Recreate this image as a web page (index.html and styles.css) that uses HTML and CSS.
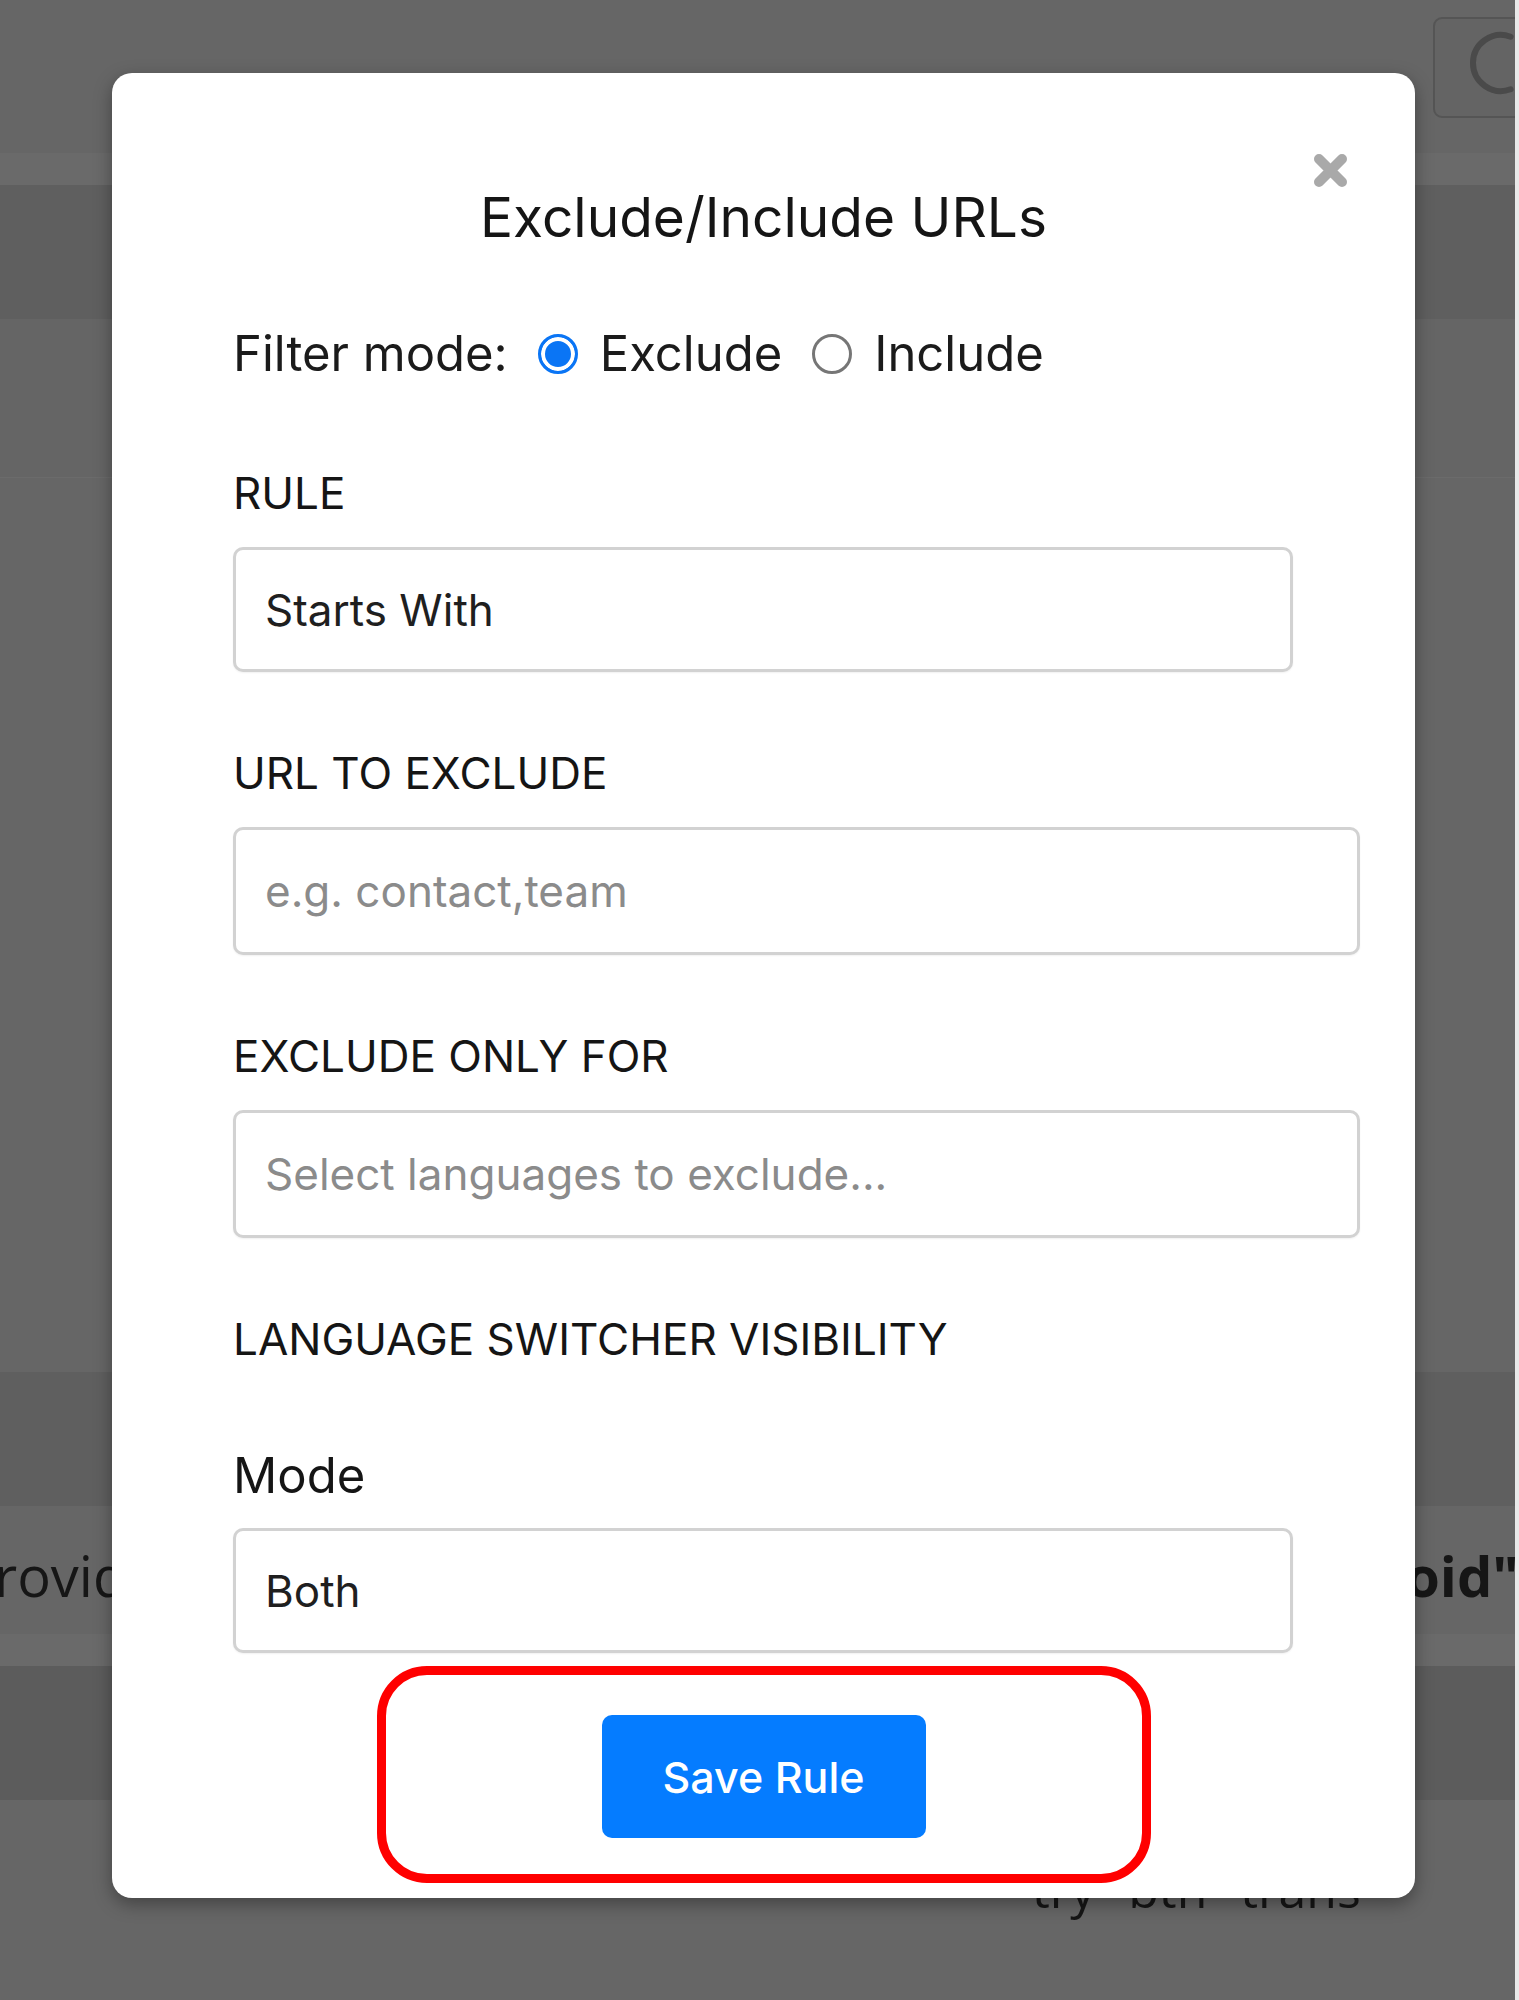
FILE: index.html
```html
<!DOCTYPE html>
<html lang="en">
<head>
<meta charset="utf-8">
<title>Exclude/Include URLs</title>
<link rel="stylesheet" href="styles.css">
</head>
<body>
<div class="screen">
  <div class="backdrop">
    <div class="band band-top">
      <div class="top-btn">
        <svg class="top-btn-icon" width="100" height="100" viewBox="0 0 100 100" aria-hidden="true">
          <path d="M77.6 21.7 A28 28 0 1 0 77.6 74.3" fill="none" stroke="#4a4a4a" stroke-width="6" stroke-linecap="round"/>
        </svg>
      </div>
    </div>
    <div class="band band-light band-h32"></div>
    <div class="band band-dark band-h134"></div>
    <div class="band band-mid band-h159"></div>
    <div class="band band-h894"></div>
    <div class="band band-dark band-h134"></div>
    <div class="band band-text">
      <span class="bg-left">provid</span>
      <span class="bg-right">oid" f</span>
    </div>
    <div class="band band-light band-h32"></div>
    <div class="band band-darker band-h134"></div>
    <div class="band band-bottom">
      <span class="bg-bottom">try "btn" trans</span>
    </div>
  </div>
  <div class="scroll-strip"></div>

  <div class="modal">
    <button class="close" aria-label="Close">
      <svg width="35" height="35" viewBox="0 0 35 35" aria-hidden="true">
        <path d="M6 6 L29 29 M29 6 L6 29" stroke="#a9a9a9" stroke-width="10" stroke-linecap="round"/>
      </svg>
    </button>
    <h2 class="title">Exclude/Include URLs</h2>

    <div class="filter-row">
      <span class="filter-label">Filter mode:</span>
      <label class="radio-opt"><input type="radio" class="radio" name="mode" checked><span>Exclude</span></label>
      <label class="radio-opt"><input type="radio" class="radio" name="mode"><span>Include</span></label>
    </div>

    <div class="field-label label-first">RULE</div>
    <select class="control select"><option>Starts With</option></select>

    <div class="field-label">URL TO EXCLUDE</div>
    <input class="control wide" type="text" placeholder="e.g. contact,team">

    <div class="field-label">EXCLUDE ONLY FOR</div>
    <input class="control wide" type="text" placeholder="Select languages to exclude...">

    <div class="field-label">LANGUAGE SWITCHER VISIBILITY</div>

    <div class="sub-label">Mode</div>
    <select class="control select"><option>Both</option></select>

    <div class="actions">
      <button class="save-btn">Save Rule</button>
    </div>
  </div>

  <div class="highlight"></div>
</div>
</body>
</html>
```
FILE: styles.css
```css
html, body {
  margin: 0;
  padding: 0;
}
body {
  width: 1519px;
  height: 2000px;
  overflow: hidden;
  background: #666666;
}

.screen {
  position: relative;
  display: flex;
  width: 1519px;
  height: 2000px;
}

/* ---------- page behind the overlay ---------- */
.backdrop {
  flex: 1;
  display: flex;
  flex-direction: column;
  background: #666666;
  overflow: hidden;
}
.scroll-strip {
  width: 4px;
  background: #e9e9e9;
}
.band {
  flex: none;
  display: flex;
  overflow: hidden;
  background: #666666;
}
.band-top { height: 153px; justify-content: flex-end; }
.band-light { background: #6a6a6a; }
.band-dark { background: #5f5f5f; }
.band-darker { background: #5c5c5c; }
.band-mid { background: #656565; border-bottom: 1px solid #6b6b6b; box-sizing: border-box; }
.band-h32 { height: 32px; }
.band-h134 { height: 134px; }
.band-h159 { height: 159px; }
.band-h894 { height: 894px; }

.top-btn {
  width: 100px;
  height: 101px;
  margin-top: 17px;
  margin-right: -18px;
  box-sizing: border-box;
  border: 2px solid #555555;
  border-radius: 9px;
  background: #646464;
  position: relative;
  overflow: hidden;
}
.top-btn-icon {
  display: block;
  margin: -4px 0 0 -2px;
}

.band-text {
  height: 128px;
  padding-top: 41px;
  box-sizing: border-box;
  font-family: "Open Sans", sans-serif;
  font-size: 56px;
  line-height: 56px;
  color: #161616;
  white-space: nowrap;
}
.bg-left { margin-left: -40px; }
.bg-right { margin-left: auto; margin-right: -40px; font-weight: 700; }

.band-bottom {
  flex: 1;
  padding: 64px 0 0 1032px;
  box-sizing: border-box;
  font-family: "Open Sans", sans-serif;
  font-size: 50px;
  line-height: 50px;
  color: #161616;
  white-space: nowrap;
}

/* ---------- modal ---------- */
.modal {
  position: absolute;
  left: 112px;
  top: 73px;
  width: 1303px;
  box-sizing: border-box;
  padding: 111px 121px 60px;
  background: #ffffff;
  border-radius: 20px;
  box-shadow: 0 6px 18px rgba(0, 0, 0, 0.35);
  font-family: "Inter", sans-serif;
  color: #1b1b1b;
}

.close {
  position: absolute;
  top: 80px;
  right: 67px;
  width: 35px;
  height: 35px;
  padding: 0;
  border: 0;
  background: none;
}
.close svg { display: block; }

.title {
  margin: 0;
  font-size: 55px;
  line-height: 66px;
  font-weight: 400;
  text-align: center;
  color: #151515;
}

.filter-row {
  margin-top: 74px;
  height: 60px;
  display: flex;
  align-items: center;
  font-size: 49px;
  line-height: 60px;
  white-space: nowrap;
}
.radio-opt {
  display: flex;
  align-items: center;
  margin-left: 30px;
}
.radio-opt span { margin-left: 22px; }
.radio {
  appearance: none;
  -webkit-appearance: none;
  width: 40px;
  height: 40px;
  margin: 0;
  box-sizing: border-box;
  border: 3px solid #767676;
  border-radius: 50%;
  background: #ffffff;
}
.radio:checked {
  border-color: #0a75f5;
  background: #0a75f5;
  box-shadow: inset 0 0 0 4px #ffffff;
}

.field-label {
  margin-top: 75px;
  margin-bottom: 27px;
  font-size: 44px;
  line-height: 53px;
  color: #151515;
}
.label-first { margin-top: 83px; }

.sub-label {
  margin-top: 80px;
  margin-bottom: 22px;
  font-size: 49px;
  line-height: 60px;
  color: #151515;
}

.control {
  display: block;
  box-sizing: border-box;
  width: 1060px;
  height: 125px;
  margin: 0;
  padding: 0 0 0 29px;
  border: 3px solid #d2d2d2;
  border-radius: 10px;
  background: #ffffff;
  font-family: "Inter", sans-serif;
  font-size: 44px;
  color: #1f1f1f;
  box-shadow: 0 1px 2px rgba(0, 0, 0, 0.06);
  outline: none;
}
.select {
  appearance: none;
  -webkit-appearance: none;
}
.wide {
  width: 1127px;
  height: 128px;
}
.wide::placeholder { color: #8b8b8b; opacity: 1; }

.actions {
  margin-top: 62px;
  display: flex;
  justify-content: center;
}
.save-btn {
  width: 324px;
  height: 123px;
  border: 0;
  border-radius: 10px;
  background: #057cff;
  color: #ffffff;
  font-family: "Inter", sans-serif;
  font-size: 43px;
  font-weight: 500;
}

/* red annotation around the action */
.highlight {
  position: absolute;
  left: 377px;
  top: 1666px;
  width: 774px;
  height: 217px;
  box-sizing: border-box;
  border: 9px solid #ff0000;
  border-radius: 50px;
  pointer-events: none;
}
```
